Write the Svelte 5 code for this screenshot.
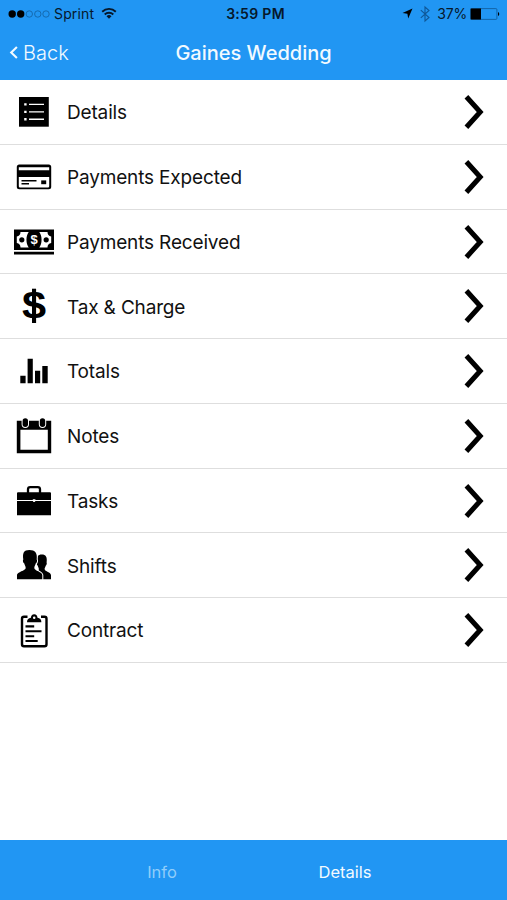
<script lang="ts">
    const items = [
        { icon: "list", label: "Details" },
        { icon: "card", label: "Payments Expected" },
        { icon: "cash", label: "Payments Received" },
        { icon: "dollar", label: "Tax & Charge" },
        { icon: "bars", label: "Totals" },
        { icon: "calendar", label: "Notes" },
        { icon: "briefcase", label: "Tasks" },
        { icon: "people", label: "Shifts" },
        { icon: "clipboard", label: "Contract" },
    ];

    const tabs = ["Info", "Details"];
    let activeTab = $state("Details");
</script>

<div class="screen">
    <header>
        <div class="status">
            <div class="carrier">
                <svg class="signal" width="42" height="10" viewBox="0 0 42 10">
                    <circle cx="4.2" cy="5" r="3.7" />
                    <circle cx="12.7" cy="5" r="3.7" />
                    {#each [21.3, 29.8, 38] as cx}
                        <circle class="empty" {cx} cy="5" r="3.2" />
                    {/each}
                </svg>
                <span class="name">Sprint</span>
                <svg class="wifi" width="16" height="12" viewBox="0 0 16 12">
                    <path d="M1.2 3.7a9.7 9.7 0 0 1 13.6 0M3.7 6.5a6.2 6.2 0 0 1 8.6 0" />
                    <path class="dot" d="M5.5 8.2a3.6 3.6 0 0 1 5 0L8 10.8z" />
                </svg>
            </div>
            <div class="clock">3:59 PM</div>
            <div class="power">
                <svg width="11" height="11" viewBox="0 0 11 11">
                    <path d="M10.5.5 6.2 10.5 5.4 5.8.5 5z" />
                </svg>
                <svg class="bluetooth" width="10" height="16" viewBox="0 0 10 16">
                    <path d="M.8 4.2 9 11.5 5 15V1l4 3.5L.8 11.8" />
                </svg>
                <span class="percent">37%</span>
                <svg class="battery" width="30" height="12" viewBox="0 0 30 12">
                    <rect class="case" x=".9" y=".6" width="26" height="10.8" rx="1" />
                    <rect x=".6" y=".5" width="10.4" height="11" />
                    <path d="M28 4a2.2 2.2 0 0 1 0 4z" />
                </svg>
            </div>
        </div>
        <div class="nav">
            <button class="back">
                <svg width="9" height="14" viewBox="0 0 9 14"><path d="M7.9.9 2.2 6.5l5.7 5.6" /></svg>
                <span>Back</span>
            </button>
            <h1>Gaines Wedding</h1>
        </div>
    </header>

    <main>
        {#each items as item}
            <button class="row">
                <svg class="icon" width="44" height="44" viewBox="0 0 44 44">
                    {#if item.icon === "list"}
                        <path d="M7 7h29.8v29.7H7z" />
                        <path class="light" stroke-width="1.4" d="M17 14.4h15M17 21.9h15M17 29.2h15" />
                        <path class="light" stroke-width="2.4" d="M12.2 14.4h2.4M12.2 21.9h2.4M12.2 29.2h2.4" />
                    {:else if item.icon === "card"}
                        <rect x="4.8" y="9.5" width="34.4" height="24.8" rx="2.5" />
                        <path class="white" d="M6.8 12.3h30.4v2.9H6.8zM6.8 22h30.4v9.2a1.2 1.2 0 0 1-1.2 1.2H8a1.2 1.2 0 0 1-1.2-1.2z" />
                        <path class="dark" stroke-width="1.4" d="M9.5 25.8h15M9.5 28.8h7.5" />
                        <path d="M29.2 25.4h5v3.8h-5z" />
                    {:else if item.icon === "cash"}
                        <path d="M2 9.5h40V30H2zM2 31.8h40v2.6H2z" />
                        <path class="white" d="M8.5 12h8.2c-3 4-3 11.5 0 15.5H8.5c0-2.5-1.3-4-3.7-4.5v-6.5c2.4-.5 3.7-2 3.7-4.5zM35.5 12h-8.2c3 4 3 11.5 0 15.5h8.2c0-2.5 1.3-4 3.7-4.5v-6.5c-2.4-.5-3.7-2-3.7-4.5z" />
                        <circle cx="9.8" cy="19.8" r="2.6" />
                        <circle cx="34.2" cy="19.8" r="2.6" />
                        <text class="white" x="22" y="24.1" font-size="13">$</text>
                    {:else if item.icon === "dollar"}
                        <text transform="translate(22 34) scale(1.14 1)" font-size="38">$</text>
                        <path d="M20 4.7h4.1v34.3H20z" />
                    {:else if item.icon === "bars"}
                        <path d="M8.3 26.7h5.3v7.6H8.3zM15.6 9.7h5.2v24.6h-5.2zM23 21.8h5.2v12.5H23zM30.3 17h5.4v17.3h-5.4z" />
                    {:else if item.icon === "calendar"}
                        <path fill-rule="evenodd" d="M4.8 6.7h34.4v32.5H4.8zM8.4 15.8v20h27.4v-20z" />
                        <rect class="ring" x="10.6" y="4.2" width="5.4" height="8.8" rx="2.7" />
                        <rect class="ring" x="27.8" y="4.2" width="5.4" height="8.8" rx="2.7" />
                    {:else if item.icon === "briefcase"}
                        <path class="dark" stroke-width="2.3" d="M16 14v-3.7q0-2.2 2.2-2.2h7.6q2.2 0 2.2 2.2V14" />
                        <path d="M6 13.3h32q1 0 1 1V21H5v-6.7q0-1 1-1zM5 22h34v14.3H5z" />
                        <path class="white" d="M20.8 20.2h2.6v1.6q0 1.3-1.3 1.3t-1.3-1.3z" />
                    {:else if item.icon === "people"}
                        <path d="M26 36.2h13v-3.9c0-3-6.2-3.6-6.4-6.2 0-1.3.8-1.8 1.1-3.4 1.1-.8 1.3-2.7.9-3.3.8-5.2-.8-7.8-4.8-7.8-3.9 0-5.7 2.6-4.9 7.8-.4.6-.2 2.5.9 3.3.3 1.6 1 2.2 1 3.4z" />
                        <path class="outlined" d="M5 36.2h25.3v-4.1c0-3.5-8-4.3-8-7.2 0-1.7 1-2.5 1.4-4.3 1.3-.7 1.8-3.5 1-4.2.9-6.3-1.6-9.4-7.3-9.4s-7 3.1-6.1 9.4c-.8.7-.3 3.5 1 4.2.4 1.8 1.4 2.6 1.4 4.3 0 2.9-8.7 3.7-8.7 7.2z" />
                    {:else}
                        <path class="dark" stroke-width="2.4" d="M15.5 8.8H12q-2 0-2 2v25.4q0 2 2 2h20.5q2 0 2-2V10.8q0-2-2-2H29" />
                        <path fill-rule="evenodd" d="M15 14.2c0-3.2 1.6-4.2 3.9-4.5 0-1.8 1.3-3.5 3.3-3.5s3.3 1.7 3.3 3.5c2.3.3 3.9 1.3 3.9 4.5zM22.2 8.4a1.2 1.2 0 1 0 0 2.5 1.2 1.2 0 0 0 0-2.5z" />
                        <path class="dark" stroke-width="2.1" d="M13.5 18.4h8.7M13.5 23.3h16M13.5 28.2h8.7M13.5 33h12.2" />
                    {/if}
                </svg>
                <span class="label">{item.label}</span>
                <svg class="chevron" width="24" height="40" viewBox="0 0 24 40">
                    <path d="M4.4 4.8 18.2 20 4.4 35.2" />
                </svg>
            </button>
        {/each}
    </main>

    <footer>
        {#each tabs as tab}
            <button class="tab" class:active={tab === activeTab} onclick={() => (activeTab = tab)}>{tab}</button>
        {/each}
    </footer>
</div>

<style>
    :global(body) {
        margin: 0;
        background: #fff;
    }
    .screen {
        display: flex;
        flex-direction: column;
        width: 507px;
        height: 900px;
        overflow: hidden;
        font-family: Inter, "Liberation Sans", sans-serif;
        color: #111;
        background: #fff;
    }
    svg {
        display: block;
        flex: none;
        overflow: visible;
    }
    button {
        padding: 0;
        border: none;
        background: none;
        font: inherit;
        color: inherit;
        cursor: pointer;
    }
    header {
        flex: none;
        height: 79.5px;
        background: #2196f3;
    }
    .status {
        display: grid;
        grid-template-columns: 1fr auto 1fr;
        align-items: center;
        height: 27px;
        padding: 0 7px 0 8px;
        font-size: 14px;
        color: #06182b;
    }
    .carrier,
    .power {
        display: flex;
        align-items: center;
    }
    .power {
        justify-content: flex-end;
    }
    .signal .empty {
        fill: none;
        stroke: #125f9f;
        stroke-width: 0.8;
    }
    .name {
        margin: 0 7px 0 4px;
        letter-spacing: 0.15px;
    }
    .wifi path {
        fill: none;
        stroke: #06182b;
        stroke-width: 1.9;
    }
    .wifi .dot {
        fill: #06182b;
        stroke: none;
    }
    .clock {
        padding-left: 3px;
        font-weight: 600;
        letter-spacing: 0.3px;
    }
    .bluetooth {
        margin: 0 7px 0 7px;
    }
    .bluetooth path {
        fill: none;
        stroke: #0f5796;
        stroke-width: 1.1;
    }
    .percent {
        margin-right: 3px;
        letter-spacing: -0.2px;
    }
    .battery .case {
        fill: none;
        stroke: #125f9f;
        stroke-width: 0.9;
    }
    .nav {
        display: grid;
        grid-template-columns: 1fr auto 1fr;
        align-items: center;
        height: 51px;
        padding: 0 9px;
        color: #f2faff;
    }
    .back {
        display: flex;
        align-items: center;
        gap: 5px;
        font-size: 20px;
        font-weight: 300;
    }
    .back path {
        fill: none;
        stroke: #f2faff;
        stroke-width: 2.1;
    }
    h1 {
        margin: 0;
        font-size: 20px;
        font-weight: 500;
    }
    main {
        flex: 1;
        display: flex;
        flex-direction: column;
        padding-top: 0.7px;
    }
    .row {
        display: flex;
        align-items: center;
        box-sizing: border-box;
        height: 64.75px;
        padding: 1.5px 21.5px 0 12px;
        border-bottom: 1.5px solid #dedede;
        text-align: left;
    }
    .icon,
    .chevron {
        margin-bottom: 1.6px;
    }
    .icon text {
        font-family: "Liberation Sans", sans-serif;
        font-weight: bold;
        text-anchor: middle;
    }
    .icon .white {
        fill: #fff;
    }
    .icon .light {
        stroke: #fff;
    }
    .icon .dark {
        fill: none;
        stroke: #000;
    }
    .icon .ring,
    .icon .outlined {
        stroke: #fff;
        stroke-width: 2;
        paint-order: stroke;
    }
    .label {
        flex: 1;
        margin-left: 11px;
        font-size: 19px;
        letter-spacing: -0.16px;
    }
    .chevron path {
        fill: none;
        stroke: #000;
        stroke-width: 5;
    }
    footer {
        flex: none;
        display: flex;
        justify-content: center;
        box-sizing: border-box;
        height: 60px;
        padding-top: 4px;
        background: #2196f3;
    }
    .tab {
        width: 183px;
        font-size: 16.5px;
        color: #90cdfa;
    }
    .tab.active {
        color: #f2faff;
    }
</style>
